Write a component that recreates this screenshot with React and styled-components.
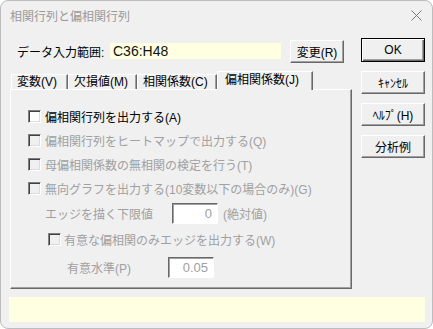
import React from "react"
import styled, { createGlobalStyle } from "styled-components"

const GlobalStyle = createGlobalStyle`
  body {
    margin: 0;
    background: #ffffff;
    font-family: "Liberation Sans", "Noto Sans CJK JP", sans-serif;
  }
  * {
    box-sizing: border-box;
  }
`

const Window = styled.div`
  width: 433px;
  height: 329px;
  background: #f0f0f0;
  border: 1px solid #bdbdbd;
  border-radius: 8px;
  display: flex;
  flex-direction: column;
  overflow: hidden;
  font-size: 12px;
  color: #000;
`

const TitleBar = styled.div`
  height: 29px;
  display: flex;
  align-items: center;
  justify-content: space-between;
  padding: 0 10px 0 9px;
  color: #9a9a9a;
  font-size: 12px;
`

const Body = styled.div`
  display: flex;
  gap: 9px;
  padding-left: 9px;
`

const LeftColumn = styled.div`
  width: 342px;
  display: flex;
  flex-direction: column;
`

const RightColumn = styled.div`
  width: 64px;
  padding-top: 8px;
  display: flex;
  flex-direction: column;
  gap: 9px;
`

const RangeRow = styled.div`
  margin-top: 10px;
  height: 22px;
  display: flex;
  align-items: center;
  padding-left: 7px;
`

const RangeLabel = styled.span`
  width: 93px;
  font-size: 12px;
`

const RangeField = styled.div`
  width: 171px;
  height: 16px;
  background: #ffffe1;
  display: flex;
  align-items: center;
  padding-left: 3px;
  font-size: 14px;
  color: #111;
`

const Button = styled.button`
  width: ${(p) => p.$w || 64}px;
  height: ${(p) => (p.$default ? 24 : 23)}px;
  margin-left: ${(p) => p.$ml || 0}px;
  padding: 0;
  background: #f0f0f0;
  font-family: inherit;
  font-size: 12px;
  color: #000;
  border: 1px solid;
  border-color: ${(p) =>
    p.$default ? "#000" : "#ffffff #696969 #696969 #ffffff"};
  box-shadow: ${(p) =>
    p.$default
      ? "inset 1px 1px #ffffff, inset -1px -1px #696969, inset -2px -2px #a0a0a0"
      : "inset -1px -1px #a0a0a0"};
  display: flex;
  align-items: center;
  justify-content: center;
`

const TabStrip = styled.div`
  margin-top: 9px;
  height: 18px;
  display: flex;
  align-items: flex-end;
  padding-left: 1px;
  position: relative;
  z-index: 1;
`

const Tab = styled.div`
  width: ${(p) => p.$w}px;
  height: ${(p) => (p.$active ? 19 : 15)}px;
  margin-bottom: ${(p) => (p.$active ? -1 : 0)}px;
  background: #f0f0f0;
  border-top: 1px solid #ffffff;
  border-left: 1px solid #ffffff;
  border-right: 1px solid #696969;
  box-shadow: inset -1px 0 #a0a0a0;
  display: flex;
  align-items: ${(p) => (p.$active ? "flex-start" : "center")};
  padding-top: ${(p) => (p.$active ? 1 : 0)}px;
  padding-left: ${(p) => (p.$active ? 7 : 5)}px;
  font-size: 12px;
  line-height: 14px;
  white-space: nowrap;
`

const Panel = styled.div`
  height: 200px;
  border: 1px solid;
  border-color: #ffffff #696969 #696969 #ffffff;
  box-shadow: inset -1px -1px #a0a0a0;
  padding-top: 14px;
  display: flex;
  flex-direction: column;
`

const CheckRow = styled.label`
  height: ${(p) => p.$h || 24}px;
  display: flex;
  align-items: center;
  padding-left: ${(p) => p.$pl || 17}px;
  gap: ${(p) => p.$gap || 4}px;
  color: ${(p) => (p.$disabled ? "#a0a0a0" : "#000")};
  white-space: nowrap;
`

const Box = styled.span`
  width: 13px;
  height: 13px;
  flex: none;
  background: ${(p) => (p.$disabled ? "#f0f0f0" : "#ffffff")};
  border: 1px solid;
  border-color: #808080 #ffffff #ffffff #808080;
  box-shadow: inset 1px 1px #404040, inset -1px -1px #dcdcdc;
`

const FieldRow = styled.div`
  height: ${(p) => p.$h}px;
  display: flex;
  align-items: center;
  padding-left: ${(p) => p.$pl}px;
  color: #a0a0a0;
  white-space: nowrap;
`

const FieldLabel = styled.span`
  width: ${(p) => p.$w}px;
`

const ValueBox = styled.div`
  width: 46px;
  height: 21px;
  background: #ffffff;
  border: 1px solid;
  border-color: #696969 #ffffff #ffffff #696969;
  box-shadow: inset 1px 1px #a0a0a0;
  display: flex;
  align-items: center;
  justify-content: flex-end;
  padding-right: 5px;
  font-size: 13px;
  color: #a0a0a0;
`

const Suffix = styled.span`
  margin-left: 5px;
`

const StatusBar = styled.div`
  margin: 8px 0 0 8px;
  width: 416px;
  height: 25px;
  background: #ffffe1;
`

const CloseIcon = () => (
  <svg width="11" height="11" viewBox="0 0 11 11">
    <path d="M0.5 0.5 L10.5 10.5 M10.5 0.5 L0.5 10.5" stroke="#7a7a7a" strokeWidth="1" fill="none" />
  </svg>
)

const tabs = [
  { label: "変数(V)", w: 57 },
  { label: "欠損値(M)", w: 69 },
  { label: "相関係数(C)", w: 80 },
  { label: "偏相関係数(J)", w: 96, active: true },
]

const options = [
  { label: "偏相関行列を出力する(A)" },
  { label: "偏相関行列をヒートマップで出力する(Q)", disabled: true },
  { label: "母偏相関係数の無相関の検定を行う(T)", disabled: true },
  { label: "無向グラフを出力する(10変数以下の場合のみ)(G)", disabled: true },
]

export default function App() {
  return (
    <>
      <GlobalStyle />
      <Window>
        <TitleBar>
          <span>相関行列と偏相関行列</span>
          <CloseIcon />
        </TitleBar>
        <Body>
          <LeftColumn>
            <RangeRow>
              <RangeLabel>データ入力範囲:</RangeLabel>
              <RangeField>C36:H48</RangeField>
              <Button $w={54} $ml={9}>変更(R)</Button>
            </RangeRow>
            <TabStrip>
              {tabs.map((t) => (
                <Tab key={t.label} $w={t.w} $active={t.active}>
                  {t.label}
                </Tab>
              ))}
            </TabStrip>
            <Panel>
              {options.map((o) => (
                <CheckRow key={o.label} $disabled={o.disabled}>
                  <Box $disabled={o.disabled} />
                  {o.label}
                </CheckRow>
              ))}
              <FieldRow $h={26} $pl={34}>
                <FieldLabel $w={127}>エッジを描く下限値</FieldLabel>
                <ValueBox>0</ValueBox>
                <Suffix>(絶対値)</Suffix>
              </FieldRow>
              <CheckRow $disabled $h={27} $pl={37} $gap={3}>
                <Box $disabled />
                有意な偏相関のみエッジを出力する(W)
              </CheckRow>
              <FieldRow $h={28} $pl={56}>
                <FieldLabel $w={101}>有意水準(P)</FieldLabel>
                <ValueBox>0.05</ValueBox>
              </FieldRow>
            </Panel>
          </LeftColumn>
          <RightColumn>
            <Button $default>OK</Button>
            <Button>ｷｬﾝｾﾙ</Button>
            <Button>ﾍﾙﾌﾟ(H)</Button>
            <Button>分析例</Button>
          </RightColumn>
        </Body>
        <StatusBar />
      </Window>
    </>
  )
}
